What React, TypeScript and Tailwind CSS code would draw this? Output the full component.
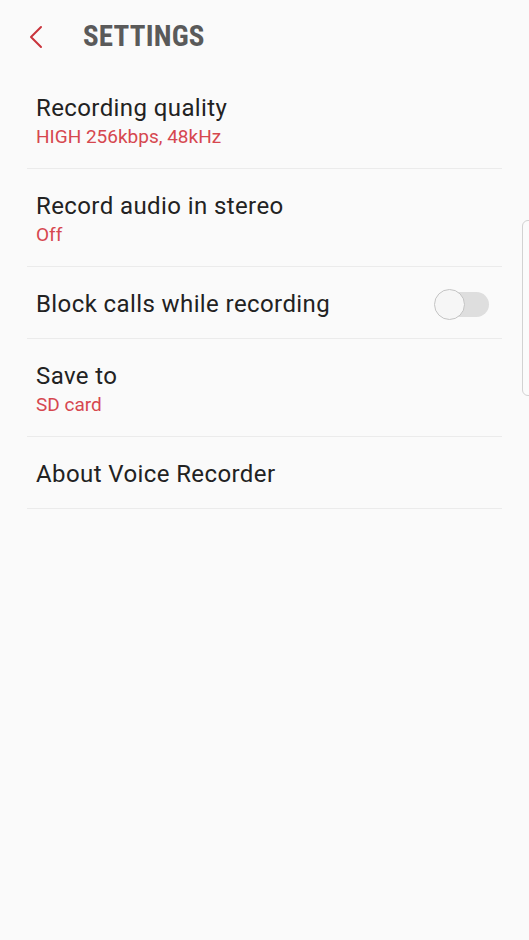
const rows: { title: string; sub?: string; toggle?: boolean }[] = [
  { title: "Recording quality", sub: "HIGH 256kbps, 48kHz" },
  { title: "Record audio in stereo", sub: "Off" },
  { title: "Block calls while recording", toggle: true },
  { title: "Save to", sub: "SD card" },
  { title: "About Voice Recorder" },
];

export default function App() {
  return (
    <div className="relative min-h-[940px] w-full overflow-hidden bg-[#fafafa] font-['Roboto',sans-serif]">
      <header className="flex h-[71px] items-center">
        <svg className="ml-[27px] mt-[3px] h-[24px] w-[18px]" viewBox="0 0 18 24" fill="none">
          <path d="M14 2 L4 12 L14 22" stroke="#c9343c" strokeWidth="2" strokeLinecap="round" strokeLinejoin="round" />
        </svg>
        <h1 className="ml-[38px] mt-[3px] text-[29px] font-bold tracking-[0.2px] text-[#5a5a5a] [font-stretch:condensed]">
          SETTINGS
        </h1>
      </header>

      <div className="ml-[27px] w-[475px]">
        {rows.map((r) => (
          <div key={r.title} className="flex items-center border-b border-[#ebebeb] pl-[9px] pr-[13px] pt-[23px] pb-[20px]">
            <div className="flex-1">
              <div className="text-[24px] leading-[28px] tracking-[0.4px] text-[#222]">{r.title}</div>
              {r.sub && (
                <div className="mt-[4px] text-[19px] leading-[22px] text-[#d6474f]">{r.sub}</div>
              )}
            </div>
            {r.toggle && (
              <div className="relative -my-[2px] h-[31px] w-[55px]">
                <div className="absolute right-0 top-[3px] h-[25px] w-[50px] rounded-full bg-[#dedede]" />
                <div className="absolute left-0 top-0 h-[31px] w-[31px] rounded-full border-[1.5px] border-[#c4c4c4] bg-[#f6f6f6]" />
              </div>
            )}
          </div>
        ))}
      </div>

      <div className="absolute left-[522px] top-[220px] h-[176px] w-[12px] rounded-l-[6px] border-[1.5px] border-[#d2d2d2] bg-[#fbfbfb]" />
    </div>
  );
}
